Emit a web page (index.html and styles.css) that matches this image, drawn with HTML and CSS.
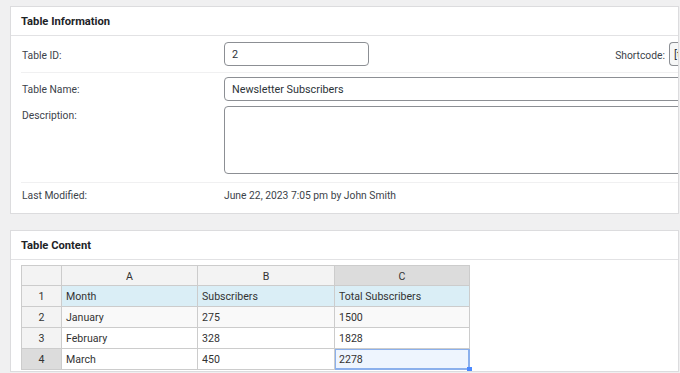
FILE: index.html
```html
<!DOCTYPE html>
<html>
<head>
<meta charset="utf-8">
<link rel="stylesheet" href="styles.css">
</head>
<body>
<div class="page">
  <section class="postbox info">
    <h2 class="postbox-title">Table Information</h2>
    <div class="postbox-body">
      <div class="row row-id">
        <div class="label">Table ID:</div>
        <div class="value">
          <input class="input input-id" type="text" value="2">
          <div class="shortcode">
            <span class="shortcode-label">Shortcode:</span>
            <input class="input input-short" type="text" value="[table id=2 /]" readonly>
          </div>
        </div>
      </div>
      <div class="row row-name">
        <div class="label">Table Name:</div>
        <div class="value"><input class="input input-name" type="text" value="Newsletter Subscribers"></div>
      </div>
      <div class="row row-desc">
        <div class="label">Description:</div>
        <div class="value"><textarea class="input textarea"></textarea></div>
      </div>
      <div class="row row-mod">
        <div class="label">Last Modified:</div>
        <div class="value">June 22, 2023 7:05 pm by John Smith</div>
      </div>
    </div>
  </section>

  <section class="postbox content">
    <h2 class="postbox-title">Table Content</h2>
    <div class="postbox-body sheet-wrap">
      <table class="sheet">
        <colgroup>
          <col class="c-head"><col class="c-a"><col class="c-b"><col class="c-c">
        </colgroup>
        <thead>
          <tr class="col-heads">
            <th class="corner"></th><th>A</th><th>B</th><th class="hl">C</th>
          </tr>
        </thead>
        <tbody>
          <tr class="first-row">
            <th>1</th><td>Month</td><td>Subscribers</td><td>Total Subscribers</td>
          </tr>
          <tr class="odd">
            <th>2</th><td>January</td><td>275</td><td>1500</td>
          </tr>
          <tr>
            <th>3</th><td>February</td><td>328</td><td>1828</td>
          </tr>
          <tr>
            <th class="hl">4</th><td>March</td><td>450</td><td class="selected">2278<span class="fill-handle"></span></td>
          </tr>
        </tbody>
      </table>
    </div>
  </section>
</div>
</body>
</html>
```
FILE: styles.css
```css
html, body {
  margin: 0;
  padding: 0;
}
body {
  background: #f0f0f1;
  font-family: "Roboto", "Noto Sans", sans-serif;
  font-size: 10.3px;
  color: #3c434a;
  width: 680px;
  height: 373px;
  overflow: hidden;
}
.page {
  padding: 6px 0 0 10px;
  display: flex;
  flex-direction: column;
  gap: 16px;
}
.postbox {
  background: #fff;
  border: 1px solid #dcdcde;
  width: 667px;
  overflow: hidden;
}
.postbox-title {
  margin: 0;
  height: 28px;
  line-height: 29px;
  padding-left: 10px;
  font-size: 11.2px;
  font-weight: 700;
  color: #1d2327;
  border-bottom: 1px solid #e2e2e4;
}
.postbox-body {
  padding: 0 0 0 10px;
}
.row {
  display: flex;
  border-bottom: 1px solid #f0f0f1;
}
.row:last-child {
  border-bottom: none;
}
.label {
  width: 203px;
  padding-left: 1px;
  box-sizing: border-box;
  flex: none;
}
.value {
  flex: 1;
  min-width: 0;
  display: flex;
  align-items: center;
}
.row-id {
  height: 36px;
  align-items: center;
}
.row-id .label, .row-name .label {
  line-height: 24px;
  height: 24px;
  padding-top: 2px;
}
.row-name .label {
  padding-top: 1px;
}
.input {
  font-family: inherit;
  font-size: 10.8px;
  color: #2c3338;
  border: 1px solid #8c8f94;
  border-radius: 4px;
  box-sizing: border-box;
  height: 24px;
  padding: 0 7px;
  background: #fff;
  outline: none;
  margin: 0;
}
.input-id {
  width: 145px;
}
.shortcode {
  margin-left: auto;
  display: flex;
  align-items: center;
  gap: 4px;
}
.shortcode-label {
  padding-top: 2px;
}
.input-short {
  width: 9px;
  padding: 0 0 0 4px;
  border-right: none;
  border-radius: 4px 0 0 4px;
  background: #f6f7f7;
  font-size: 11px;
}
.row-name {
  border-bottom: none;
  padding-top: 4px;
}
.input-name {
  width: 470px;
  flex: none;
}
.row-desc {
  padding-top: 5px;
  padding-bottom: 8px;
}
.row-desc .label {
  padding-top: 3px;
}
.textarea {
  width: 470px;
  flex: none;
  height: 68px;
  resize: none;
  display: block;
}
.row-mod {
  height: 30px;
  padding-top: 6px;
  box-sizing: border-box;
  line-height: 14px;
}
.row-mod .value {
  align-items: flex-start;
  color: #3c434a;
}

.sheet-wrap {
  padding-top: 5px;
  padding-bottom: 1px;
}
.sheet {
  border-collapse: collapse;
  table-layout: fixed;
  font-size: 10.6px;
  color: #333;
}
.c-head { width: 40px; }
.c-a { width: 136px; }
.c-b { width: 137px; }
.c-c { width: 135px; }
.sheet th, .sheet td {
  border: 1px solid #ccc;
  padding: 1px 4px 0;
  height: 20px;
  box-sizing: border-box;
  white-space: nowrap;
  position: relative;
}
.sheet th {
  background: #f3f3f3;
  font-weight: 400;
  text-align: center;
  color: #333;
}
.sheet tbody tr {
  height: 21px;
}
.sheet td {
  text-align: left;
  background: #fff;
}
.first-row td {
  background: #daeef6;
}
.odd td {
  background: #f9f9f9;
}
.sheet th.hl {
  background: #dcdcdc;
}
.sheet td.selected {
  background: #eef5fe;
  box-shadow: inset 0 0 0 1px #8bb0ec;
  border-color: #8bb0ec;
}
.fill-handle {
  position: absolute;
  right: -3px;
  bottom: -3px;
  width: 5px;
  height: 5px;
  background: #4b89ff;
}
```
